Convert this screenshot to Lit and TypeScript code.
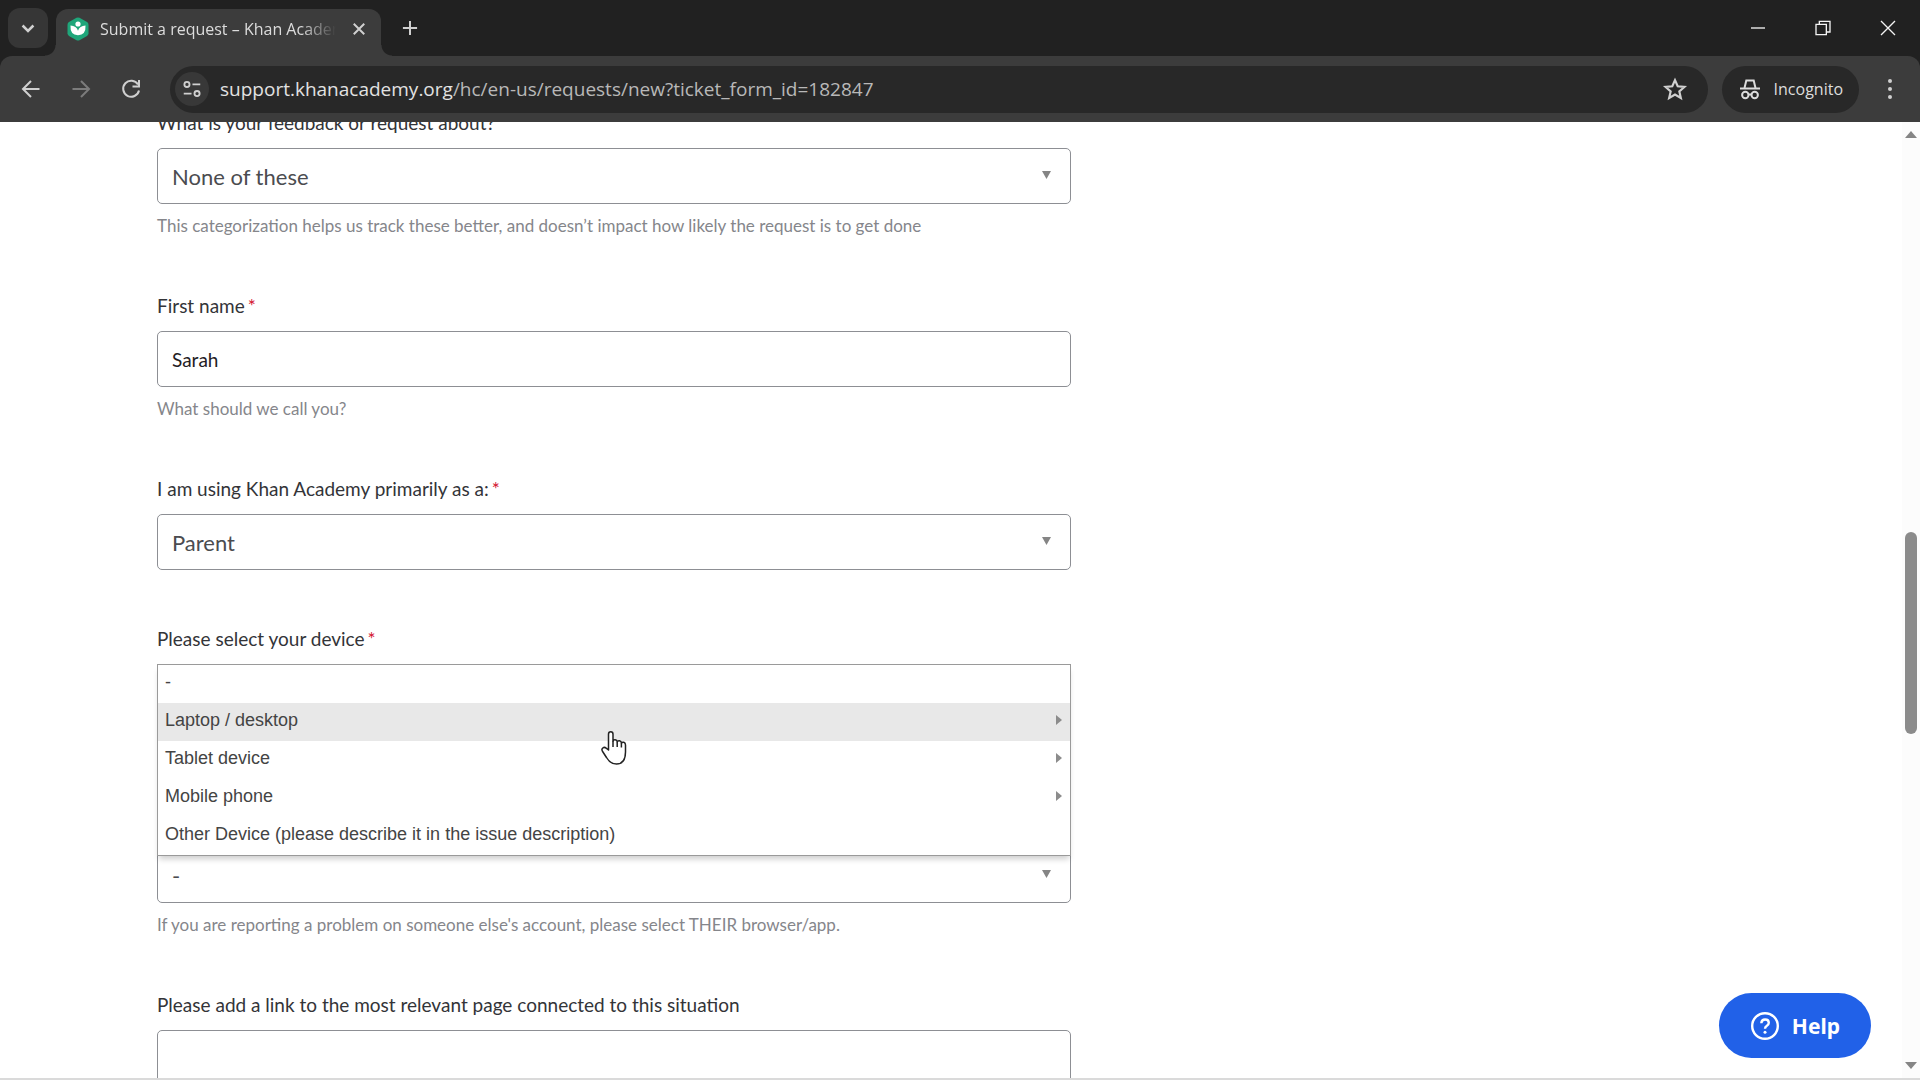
import { LitElement, html, css, svg, nothing } from "lit";
import { customElement, property } from "lit/decorators.js";
import { classMap } from "lit/directives/class-map.js";

const icon = (size: number, body: unknown) => html`
  <svg width=${size} height=${size} viewBox="0 0 24 24" fill="none" stroke="currentColor" stroke-width="2" aria-hidden="true">${body}</svg>
`;

@customElement("browser-chrome")
class BrowserChrome extends LitElement {
  @property() title = "";
  @property() host = "";
  @property() path = "";

  static styles = css`
    :host {
      display: block;
      flex: none;
      background: #212121;
      color: #d0d0d0;
      font-family: "Open Sans", "Noto Sans", sans-serif;
    }
    button {
      display: grid;
      place-items: center;
      padding: 0;
      border: 0;
      background: none;
      color: inherit;
      font: inherit;
    }
    svg {
      display: block;
    }
    .strip {
      display: flex;
      align-items: flex-end;
      height: 56px;
    }
    .search {
      width: 40px;
      height: 40px;
      margin: 0 8px 8px;
      border-radius: 12px;
      background: #363636;
    }
    .tab {
      position: relative;
      display: flex;
      align-items: center;
      gap: 11px;
      box-sizing: border-box;
      width: 325px;
      height: 47px;
      padding: 0 10px 8px 11px;
      border-radius: 12px 12px 0 0;
      background: #3c3c3c;
    }
    .tab::before,
    .tab::after {
      content: "";
      position: absolute;
      bottom: 0;
      width: 11px;
      height: 11px;
    }
    .tab::before {
      right: 100%;
      background: radial-gradient(circle at 0 0, transparent 10px, #3c3c3c 11px);
    }
    .tab::after {
      left: 100%;
      background: radial-gradient(circle at 100% 0, transparent 10px, #3c3c3c 11px);
    }
    .title {
      flex: 1;
      overflow: hidden;
      white-space: nowrap;
      font-size: 16px;
      line-height: 24px;
      color: #dcdcdc;
      mask-image: linear-gradient(90deg, #000 85%, transparent);
    }
    .close {
      width: 24px;
      height: 24px;
    }
    .plus {
      width: 36px;
      height: 36px;
      margin: 0 0 10px 11px;
    }
    .windows {
      display: flex;
      margin-left: auto;
    }
    .windows button {
      width: 65px;
      height: 56px;
      color: #f4f4f4;
    }
    .bar {
      display: flex;
      align-items: center;
      height: 66px;
      box-sizing: border-box;
      padding: 0 13px 0 6px;
      border-radius: 12px 12px 0 0;
      background: #3c3c3c;
    }
    .nav {
      width: 50px;
      height: 48px;
    }
    .off {
      color: #7c7c7c;
    }
    .omnibox {
      display: flex;
      flex: 1;
      align-items: center;
      height: 47px;
      box-sizing: border-box;
      margin-left: 14px;
      padding: 0 20px 0 5px;
      border-radius: 24px;
      background: #282828;
    }
    .site {
      width: 34px;
      height: 34px;
      border-radius: 17px;
      background: #383838;
    }
    .url {
      flex: 1;
      margin-left: 11px;
      font-size: 19px;
      line-height: 26px;
      color: #b8b8b8;
    }
    .url b {
      font-weight: 400;
      color: #e2e2e2;
    }
    .incognito {
      display: flex;
      align-items: center;
      gap: 12px;
      height: 47px;
      margin: 0 14px;
      padding: 0 16px;
      border-radius: 24px;
      background: #282828;
      font-size: 16px;
      color: #dcdcdc;
    }
    .menu {
      width: 34px;
      height: 40px;
    }
  `;

  render() {
    return html`
      <div class="strip">
        <button class="search" aria-label="Search tabs">${icon(20, svg`<path d="M5.500 9l6.500 6.500L18.500 9" stroke-width="3" />`)}</button>
        <div class="tab">
          <svg width="22" height="24" viewBox="0 0 22 24" aria-hidden="true">
            <path d="M9.500.8q1.500-.8 3 0l7.500 4.300q1.500.9 1.500 2.600v8.600q0 1.700-1.500 2.600l-7.500 4.300q-1.500.8-3 0L2 18.900Q.5 18 .5 16.300V7.700Q.5 6 2 5.100z" fill="#1fa67a" />
            <circle cx="11" cy="7" r="2.600" fill="#fff" />
            <path d="M3.500 8.500q6 .2 7.500 5.200q1.500-5 7.500-5.200q.6 9.500-7.500 9.700q-8.100-.2-7.500-9.700z" fill="#fff" />
          </svg>
          <span class="title">${this.title}</span>
          <button class="close" aria-label="Close tab">${icon(18, svg`<path d="M5 5l14 14M19 5L5 19" stroke-width="2.600" />`)}</button>
        </div>
        <button class="plus" aria-label="New tab">${icon(20, svg`<path d="M12 3.500v17M3.500 12h17" stroke-width="2.400" />`)}</button>
        <div class="windows">
          <button aria-label="Minimize">${icon(16, svg`<path d="M1.500 12h21" />`)}</button>
          <button aria-label="Restore">${icon(16, svg`<path d="M1.500 6.500h15.500v15.500H1.500zM6.500 6V2h16v16h-5" />`)}</button>
          <button aria-label="Close window">${icon(16, svg`<path d="M1.500 1.500l21 21M22.500 1.500l-21 21" />`)}</button>
        </div>
      </div>
      <div class="bar">
        <button class="nav" aria-label="Back">${icon(24, svg`<path d="M20.500 12H4.500M12 4l-8 8 8 8" />`)}</button>
        <button class="nav off" aria-label="Forward">${icon(24, svg`<path d="M3.500 12h16M12 4l8 8-8 8" />`)}</button>
        <button class="nav" aria-label="Reload">${icon(24, svg`<path d="M19 7.500A8 8 0 1 0 20 13.500M20 3v6.500h-6.500" />`)}</button>
        <div class="omnibox">
          <button class="site" aria-label="View site information">${icon(22, svg`<circle cx="6.500" cy="7" r="2.800" /><path d="M12.500 7H21M3 17h8.500" /><circle cx="17.500" cy="17" r="2.800" />`)}</button>
          <span class="url"><b>${this.host}</b>${this.path}</span>
          <button aria-label="Bookmark this page">${icon(26, svg`<path d="M12 3.800l2.500 5.700 6.200.6-4.700 4.100 1.400 6.100L12 17.100l-5.400 3.200L8 14.200l-4.700-4.100 6.200-.6z" />`)}</button>
        </div>
        <button class="incognito">
          ${icon(24, svg`<path d="M2 11.500h20" /><path d="M6.500 11l1.800-7.500h7.400l1.800 7.500" /><circle cx="7.300" cy="18" r="3.200" /><circle cx="16.700" cy="18" r="3.200" /><path d="M10 17.500h4" />`)}
          Incognito
        </button>
        <button class="menu" aria-label="Menu">${icon(24, svg`<g fill="currentColor" stroke="none"><circle cx="12" cy="4" r="2" /><circle cx="12" cy="12" r="2" /><circle cx="12" cy="20" r="2" /></g>`)}</button>
      </div>
    `;
  }
}

interface Field {
  id: string;
  label: string;
  kind: "select" | "text" | "menu";
  value: string;
  required?: boolean;
  hint?: string;
}

const FIELDS: Field[] = [
  {
    id: "topic",
    label: "What is your feedback or request about?",
    kind: "select",
    value: "None of these",
    hint: "This categorization helps us track these better, and doesn’t impact how likely the request is to get done",
  },
  { id: "first-name", label: "First name", kind: "text", value: "Sarah", required: true, hint: "What should we call you?" },
  { id: "role", label: "I am using Khan Academy primarily as a:", kind: "select", value: "Parent", required: true },
  { id: "device", label: "Please select your device", kind: "menu", value: "-", required: true, hint: "\u00a0" },
  {
    id: "browser",
    label: "\u00a0",
    kind: "select",
    value: "-",
    hint: "If you are reporting a problem on someone else's account, please select THEIR browser/app.",
  },
  { id: "link", label: "Please add a link to the most relevant page connected to this situation", kind: "text", value: "" },
];

const DEVICES = [
  { name: "-", nested: false },
  { name: "Laptop / desktop", nested: true, active: true },
  { name: "Tablet device", nested: true },
  { name: "Mobile phone", nested: true },
  { name: "Other Device (please describe it in the issue description)", nested: false },
];

@customElement("request-form")
class RequestForm extends LitElement {
  static styles = css`
    :host {
      display: block;
      padding: 0 157px;
    }
    .form {
      display: flex;
      flex-direction: column;
      gap: 58px;
      max-width: 914px;
      margin-top: -11px;
      font-family: Lato, sans-serif;
      color: #333438;
    }
    .field {
      display: flex;
      flex-direction: column;
    }
    .label {
      margin-bottom: 13px;
      font-size: 19px;
      line-height: 24px;
    }
    .star {
      margin-left: 3px;
      color: #d3122f;
    }
    .hint {
      margin: 13px 0 0;
      font-size: 17px;
      line-height: 20px;
      color: #85868b;
    }
    .control {
      position: relative;
      display: grid;
      align-items: center;
    }
    .box {
      grid-area: 1 / 1;
      width: 100%;
      height: 56px;
      margin-bottom: -1px;
      box-sizing: border-box;
      padding: 0 14px;
      border: 1px solid #8d8f94;
      border-radius: 5px;
      outline: 0;
      background: #fff;
      color: #1f2024;
      font: 19px Lato, sans-serif;
      appearance: none;
    }
    .pick {
      color: #4b4c50;
      font-size: 22px;
    }
    .arrow {
      grid-area: 1 / 1;
      justify-self: end;
      margin-right: 20px;
      pointer-events: none;
      fill: #858585;
    }
    .list {
      position: absolute;
      z-index: 1;
      inset: 0 0 auto;
      margin: 0;
      padding: 0;
      border: 1px solid #9a9a9a;
      background: #fff;
      box-shadow: 0 5px 6px -2px rgba(0, 0, 0, 0.2);
      list-style: none;
    }
    .option {
      display: flex;
      align-items: center;
      justify-content: space-between;
      width: 100%;
      height: 38px;
      padding: 0 8px 4px 7px;
      border: 0;
      background: none;
      color: #444;
      font: 18px "Liberation Sans", sans-serif;
      text-align: left;
    }
    .active {
      background: #e8e8e8;
    }
    .option svg {
      fill: #8c8c8c;
    }
  `;

  private control(f: Field) {
    if (f.kind === "text") return html`<input class="box" id=${f.id} type="text" .value=${f.value} />`;
    return html`
      <select class="box pick" id=${f.id}><option>${f.value}</option></select>
      <svg class="arrow" width="9" height="9" viewBox="0 0 9 9" aria-hidden="true"><path d="M0 0h9L4.500 8z" /></svg>
      ${f.kind === "menu"
        ? html`<ul class="list">
            ${DEVICES.map(
              (d) => html`<li>
                <button type="button" class=${classMap({ option: true, active: !!d.active })}>
                  <span>${d.name}</span>
                  ${d.nested ? html`<svg width="6" height="10" viewBox="0 0 6 10" aria-hidden="true"><path d="M0 0l6 5-6 5z" /></svg>` : nothing}
                </button>
              </li>`,
            )}
          </ul>`
        : nothing}
    `;
  }

  render() {
    return html`
      <form class="form">
        ${FIELDS.map(
          (f) => html`<div class="field">
            <label class="label" for=${f.id}>${f.label}${f.required ? html`<span class="star">*</span>` : nothing}</label>
            <div class="control">${this.control(f)}</div>
            ${f.hint ? html`<p class="hint">${f.hint}</p>` : nothing}
          </div>`,
        )}
      </form>
    `;
  }
}

@customElement("app-root")
class AppRoot extends LitElement {
  static styles = css`
    :host {
      display: flex;
      flex-direction: column;
      height: 100vh;
      overflow: hidden;
      background: #fff;
    }
    .view {
      position: relative;
      display: flex;
      flex: 1;
      min-height: 0;
      border-bottom: 2px solid #dadada;
    }
    .page {
      flex: 1;
      min-width: 0;
      overflow: hidden;
      isolation: isolate;
    }
    .scroll {
      display: flex;
      flex-direction: column;
      align-items: center;
      width: 18px;
      box-sizing: border-box;
      padding: 9px 2px;
      background: #fcfcfc;
      fill: #858585;
    }
    .before {
      flex: 393;
    }
    .thumb {
      flex: 202;
      width: 12px;
      border-radius: 6px;
      background: #8b8b8b;
    }
    .after {
      flex: 327;
    }
    .help {
      position: absolute;
      right: 49px;
      bottom: 20px;
      display: flex;
      align-items: center;
      justify-content: center;
      gap: 12px;
      height: 65px;
      padding: 0 31px;
      border: 0;
      border-radius: 33px;
      background: #2161e8;
      color: #fff;
      font: 700 21px "Noto Sans", sans-serif;
    }
    .cursor {
      position: absolute;
      left: 600px;
      top: 608px;
      pointer-events: none;
    }
  `;

  render() {
    return html`
      <browser-chrome
        title="Submit a request – Khan Academy"
        host="support.khanacademy.org"
        path="/hc/en-us/requests/new?ticket_form_id=182847"
      ></browser-chrome>
      <div class="view">
        <main class="page"><request-form></request-form></main>
        <div class="scroll">
          <svg width="12" height="7" viewBox="0 0 12 7" aria-hidden="true"><path d="M0 7h12L6 0z" /></svg>
          <div class="before"></div>
          <div class="thumb"></div>
          <div class="after"></div>
          <svg width="12" height="7" viewBox="0 0 12 7" aria-hidden="true"><path d="M0 0h12L6 7z" /></svg>
        </div>
        <button class="help">
          <svg width="30" height="30" viewBox="0 0 30 30" fill="none" stroke="#fff" stroke-width="2.400" aria-hidden="true">
            <circle cx="15" cy="15" r="12.800" />
            <path d="M11.300 12.200q.2-3.700 3.800-3.700t3.700 3.300q0 1.800-1.900 2.900T15 17.800" />
            <circle cx="15" cy="21.300" r="1.500" fill="#fff" stroke="none" />
          </svg>
          Help
        </button>
        <svg class="cursor" width="28" height="36" viewBox="0 0 28 36" aria-hidden="true">
          <path
            d="M8.500 20V4.200C8.500 1 13 1 13 4.200V11C13.500 9 17 9.200 17.200 11.800C18 10 21.200 10.400 21.400 13C22.400 11.500 25.500 12 25.500 15V22C25.500 30 22 34 16.500 34C11 34 8.500 31 6.500 27.500L2.600 21.500C.6 18.500 4 16.200 6.200 18.200Z"
            fill="#fff" stroke="#222" stroke-width="1.500" stroke-linejoin="round"
          />
          <path d="M13 11v6M17.200 12v5M21.400 13v4.500" stroke="#222" stroke-width="1.500" />
        </svg>
      </div>
    `;
  }
}
